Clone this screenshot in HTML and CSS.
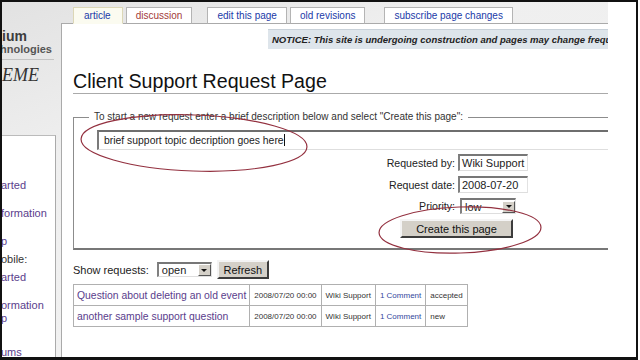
FILE: index.html
```html
<!DOCTYPE html>
<html lang="en">

<head>
    <meta charset="UTF-8">
    <meta name="viewport" content="width=device-width, initial-scale=1.0">
    <title>Client Support Request Page</title>
    <link rel="stylesheet" href="styles.css">
</head>

<body>
    <div class="stage">
        <div class="frame">
            <div class="shot">
                <aside class="sidebar">
                    <div class="logo">
                        <div class="logo-top">ium</div>
                        <div class="logo-sub">hnologies</div>
                        <div class="logo-name">EME</div>
                    </div>
                    <div class="portlet">
                        <a class="nav first">arted</a>
                        <a class="nav gap-m">formation</a>
                        <a class="nav gap-m">p</a>
                        <span class="nav plain gap-s">obile:</span>
                        <a class="nav gap-s">arted</a>
                        <a class="nav gap-m">ormation</a>
                        <a class="nav">p</a>
                        <a class="nav gap-l">ums</a>
                    </div>
                </aside>

                <div class="main">
                    <ul class="tabs">
                        <li class="tab selected">article</li>
                        <li class="tab new">discussion</li>
                        <li class="tab wide-gap">edit this page</li>
                        <li class="tab">old revisions</li>
                        <li class="tab far-gap">subscribe page changes</li>
                    </ul>

                    <div class="content">
                        <div class="notice">NOTICE: This site is undergoing construction and pages may change frequently.</div>
                        <h1>Client Support Request Page</h1>

                        <fieldset class="request">
                            <legend>To start a new request enter a brief description below and select "Create this page":</legend>
                            <div class="topic">brief support topic decription goes here<span class="caret"></span></div>
                            <div class="meta">
                                <label>Requested by:</label>
                                <div class="field">Wiki Support</div>
                                <label>Request date:</label>
                                <div class="field">2008-07-20</div>
                                <label>Priority:</label>
                                <div class="select small">low<span class="arrow"></span></div>
                                <button class="create" type="button">Create this page</button>
                            </div>
                        </fieldset>

                        <div class="filter">
                            <span>Show requests:</span>
                            <div class="select">open<span class="arrow"></span></div>
                            <button class="refresh" type="button">Refresh</button>
                        </div>

                        <table class="requests">
                            <tr>
                                <td class="title"><a>Question about deleting an old event</a></td>
                                <td>2008/07/20 00:00</td>
                                <td>Wiki Support</td>
                                <td><a>1 Comment</a></td>
                                <td>accepted</td>
                            </tr>
                            <tr>
                                <td class="title"><a>another sample support question</a></td>
                                <td>2008/07/20 00:00</td>
                                <td>Wiki Support</td>
                                <td><a>1 Comment</a></td>
                                <td>new</td>
                            </tr>
                        </table>
                    </div>
                </div>
            </div>
        </div>

        <!-- hand drawn marks over the screenshot -->
        <svg class="marks" viewBox="0 0 640 360" width="640" height="360">
            <ellipse cx="194" cy="143" rx="113" ry="28" transform="rotate(2 194 143)" />
            <ellipse cx="460" cy="230" rx="81" ry="23" transform="rotate(-2 460 230)" />
        </svg>
    </div>
</body>

</html>
```

FILE: styles.css
```css
* {
    margin: 0;
    padding: 0;
    box-sizing: border-box;
}

body {
    background-color: #ffffff;
    font-family: 'Liberation Sans', Arial, sans-serif;
    color: #111;
}

a {
    color: #5a3d8c;
}

.stage {
    position: relative;
    width: 640px;
    height: 360px;
}

.frame {
    width: 638px;
    height: 360px;
    border: 2px solid #111;
    border-bottom-width: 3px;
    background-color: #ffffff;
    overflow: hidden;
}

.shot {
    width: 606px;
    height: 100%;
    display: flex;
    overflow: hidden;
    background: linear-gradient(160deg, #e2e2e2 0%, #efefef 30%, #f3f3f3 100%);
}

/* sidebar */

.sidebar {
    width: 59px;
    flex: none;
    display: flex;
    flex-direction: column;
}

.logo {
    height: 133px;
    padding-top: 27px;
    overflow: hidden;
}

.logo-top {
    font-size: 14px;
    font-weight: bold;
    line-height: 14px;
    color: #3c3c3c;
}

.logo-sub {
    margin-left: -2px;
    font-size: 11px;
    font-weight: bold;
    line-height: 13px;
    color: #555;
    padding-bottom: 3px;
    border-bottom: 1px solid #c4c4c4;
    width: 54px;
}

.logo-name {
    margin-top: 6px;
    font-family: 'Liberation Serif', 'Times New Roman', serif;
    font-style: italic;
    font-size: 18px;
    line-height: 18px;
    color: #333;
}

.portlet {
    flex: 1;
    width: 54px;
    background-color: #ffffff;
    border-top: 1px solid #bbb;
    border-right: 1px solid #aaa;
    padding-top: 43px;
    display: flex;
    flex-direction: column;
    overflow: hidden;
}

.nav {
    display: block;
    font-size: 11px;
    line-height: 13px;
    margin-left: -1px;
    white-space: nowrap;
}

.nav.plain {
    color: #333;
}

.nav.gap-s {
    margin-top: 5px;
}

.nav.gap-m {
    margin-top: 15px;
}

.nav.gap-l {
    margin-top: 21px;
}

/* main column */

.main {
    flex: 1;
    display: flex;
    flex-direction: column;
    min-width: 0;
}

.tabs {
    height: 22px;
    list-style: none;
    display: flex;
    align-items: flex-end;
    padding-left: 12px;
    position: relative;
    z-index: 1;
    margin-bottom: -1px;
}

.tab {
    height: 17px;
    padding: 0 9px;
    font-size: 10px;
    line-height: 15px;
    color: #1a3aa8;
    background-color: #ffffff;
    border: 1px solid #b4b4b4;
    border-bottom-color: #aaa;
    white-space: nowrap;
    margin-right: 3px;
}

.tab.selected {
    padding: 0 11px 0 10px;
    background-color: #fbfbf0;
    border-color: #dcd7b6;
    border-bottom-color: #fbfbf0;
}

.tab.new {
    color: #a33a3a;
}

.tab.wide-gap {
    margin-left: 12px;
}

.tab.far-gap {
    margin-left: 16px;
}

.content {
    flex: 1;
    background-color: #ffffff;
    border-top: 1px solid #aaa;
    border-left: 1px solid #aaa;
    padding: 5px 0 0 11px;
    overflow: hidden;
}

.notice {
    margin-left: 195px;
    width: 520px;
    height: 20px;
    padding-left: 4px;
    background-color: #dee5eb;
    border-top: 1px solid #c9d2da;
    font-size: 9.5px;
    font-weight: bold;
    font-style: italic;
    line-height: 19px;
    white-space: nowrap;
    color: #222;
}

h1 {
    margin-top: 20px;
    font-size: 19.6px;
    font-weight: normal;
    line-height: 24px;
    border-bottom: 1px solid #aaa;
    color: #111;
}

/* request form */

.request {
    margin: 17px -300px 0 0;
    border: 1px solid #8c8c8c;
    border-bottom: 2px solid #777;
    padding: 0 0 10px;
}

.request legend {
    margin-left: 15px;
    padding: 0 5px;
    font-size: 10px;
    line-height: 12px;
    color: #333;
}

.topic {
    margin: 7px 0 0 23px;
    width: 560px;
    height: 20px;
    padding-left: 5px;
    font-size: 10.4px;
    line-height: 17px;
    border-style: solid;
    border-width: 2px 1px 1px 2px;
    border-color: #6e6e6e #e4e4e4 #dedede #7a7a7a;
    color: #222;
}

.caret {
    display: inline-block;
    width: 1px;
    height: 12px;
    background-color: #111;
    vertical-align: -2px;
}

.meta {
    margin: 4px 0 0 301px;
    display: grid;
    grid-template-columns: 80px 80px;
    column-gap: 3px;
    row-gap: 5px;
    align-items: center;
}

.meta label {
    font-size: 10.6px;
    text-align: right;
    color: #222;
}

.field {
    width: 70px;
    height: 17px;
    padding-left: 2px;
    font-size: 11px;
    line-height: 14px;
    border-style: solid;
    border-width: 2px 1px 1px 2px;
    border-color: #777 #e2e2e2 #dedede #808080;
    color: #222;
}

.select {
    width: 55px;
    height: 16px;
    display: flex;
    align-items: center;
    justify-content: space-between;
    padding-left: 3px;
    font-size: 11px;
    border-style: solid;
    border-width: 2px 1px 1px 2px;
    border-color: #777 #e2e2e2 #dedede #808080;
    color: #222;
    background-color: #ffffff;
}

.select.small {
    width: 56px;
    margin-left: 2px;
}

.arrow {
    width: 13px;
    height: 12px;
    background-color: #d4d0c8;
    border: 1px solid;
    border-color: #fff #555 #555 #fff;
    display: flex;
    align-items: center;
    justify-content: center;
}

.arrow::after {
    content: '';
    border-left: 3px solid transparent;
    border-right: 3px solid transparent;
    border-top: 3px solid #111;
}

.create {
    grid-column: 1 / -1;
    justify-self: center;
    width: 113px;
    height: 19px;
    font-family: inherit;
    font-size: 11px;
    color: #111;
    background-color: #d4d0c8;
    border: 2px solid;
    border-color: #f4f4f4 #3c3c3c #3c3c3c #f4f4f4;
}

/* request list */

.filter {
    margin-top: 10px;
    display: flex;
    align-items: center;
    height: 19px;
    font-size: 11px;
    color: #222;
}

.filter .select {
    margin-left: 8px;
    height: 15px;
}

.refresh {
    margin-left: 5px;
    width: 52px;
    height: 19px;
    font-family: inherit;
    font-size: 11px;
    color: #111;
    background-color: #d4d0c8;
    border: 2px solid;
    border-color: #f4f4f4 #3c3c3c #3c3c3c #f4f4f4;
}

.requests {
    margin-top: 5px;
    border-collapse: collapse;
    font-size: 8px;
    color: #333;
}

.requests td {
    height: 21px;
    padding: 0 4px;
    border: 1px solid #b0b0b0;
    white-space: nowrap;
}

.requests td.title {
    width: 172px;
    padding: 0 3px;
    font-size: 10.4px;
}

.requests td a {
    color: #34479c;
}

.requests td.title a {
    color: #5a3d8c;
}

.marks {
    position: absolute;
    top: 0;
    left: 0;
    pointer-events: none;
}

.marks ellipse {
    fill: none;
    stroke: #93303f;
    stroke-width: 1.2;
}
```
